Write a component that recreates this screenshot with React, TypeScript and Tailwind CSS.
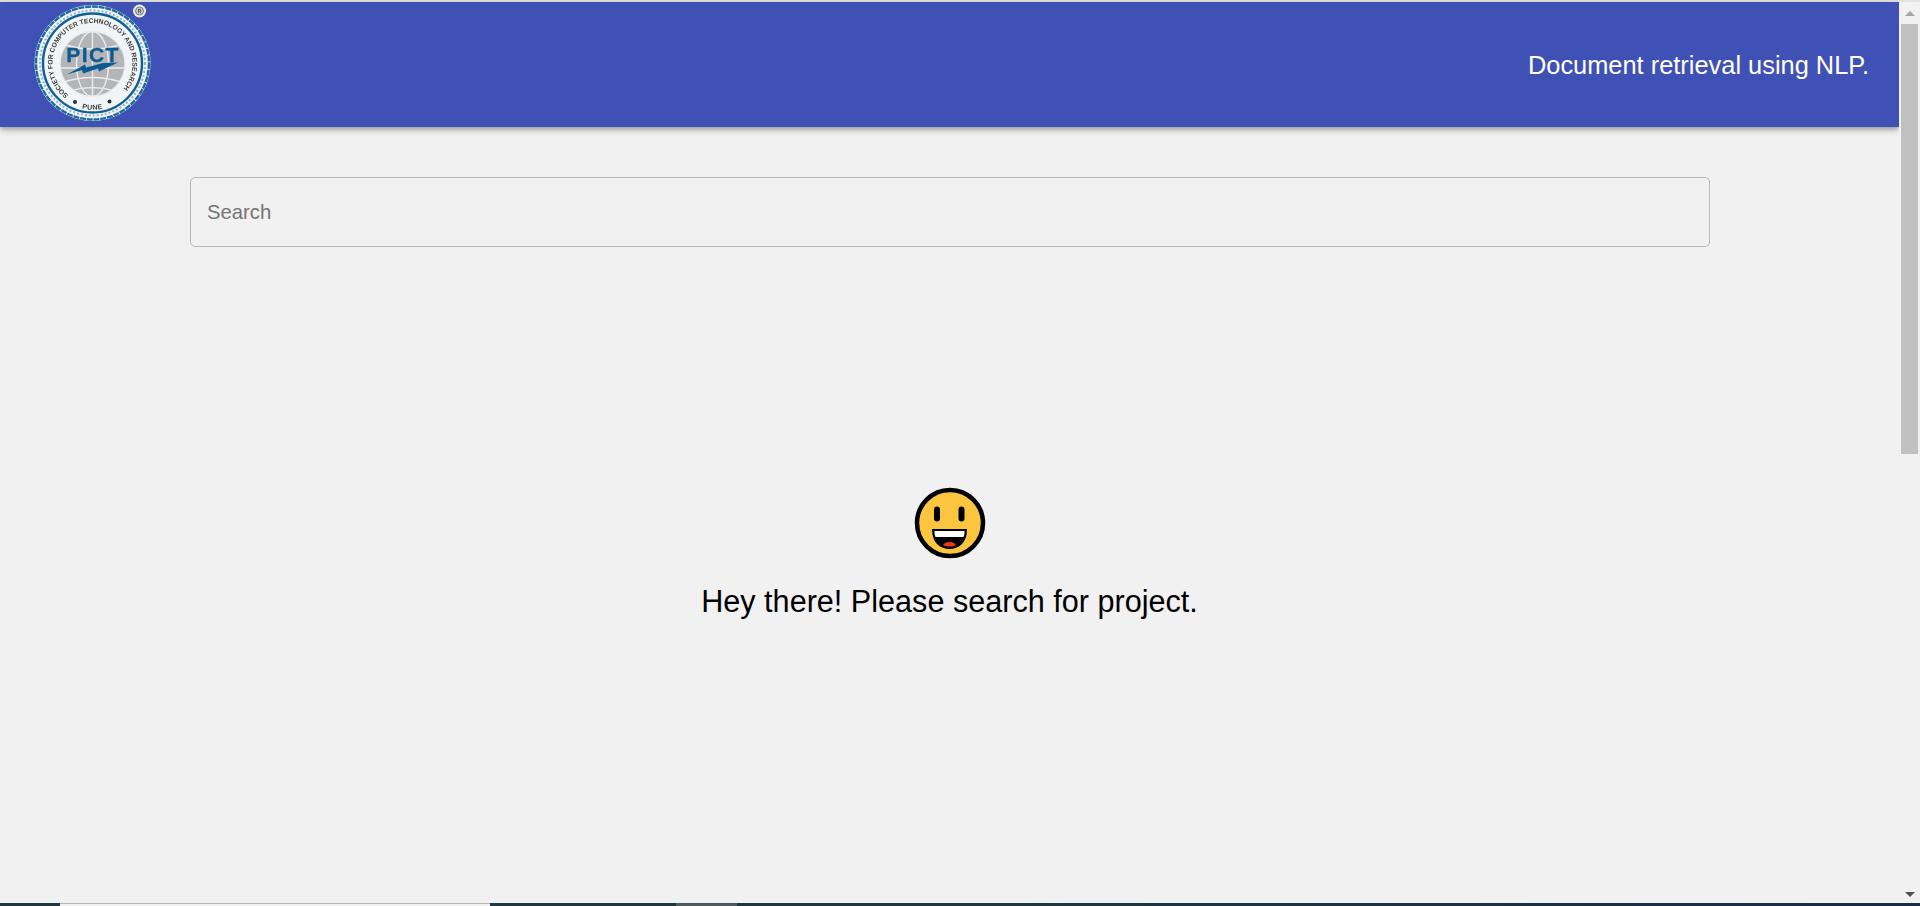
function Logo() {
  return (
    <svg width="120" height="120" viewBox="0 0 120 120" className="blur-[0.5px]">
      <defs>
        <path id="ring-top" d="M 36.5 93 A 40 40 0 1 1 84.5 93" fill="none" />
        <path id="ring-bottom" d="M 20.5 82 A 44 44 0 0 0 100.5 82" fill="none" />
        <clipPath id="globe-clip">
          <circle cx="60.5" cy="62" r="32.5" />
        </clipPath>
      </defs>
      <circle cx="60.5" cy="61" r="58" fill="#f2f5f7" />
      <circle cx="60.5" cy="61" r="56.5" fill="none" stroke="#1d6a9c" strokeWidth="2.4" strokeDasharray="6 0.8" />
      <circle cx="60.5" cy="61" r="52.5" fill="none" stroke="#8fb3ca" strokeWidth="2" strokeDasharray="2 2" />
      <circle cx="60.5" cy="61" r="49.5" fill="none" stroke="#0f5f94" strokeWidth="2.4" />
      <text fontFamily="Liberation Sans, sans-serif" fontSize="6.7" fontWeight="700" fill="#3a3a3a">
        <textPath href="#ring-top">SOCIETY FOR COMPUTER TECHNOLOGY AND RESEARCH</textPath>
      </text>
      <text fontFamily="Liberation Sans, sans-serif" fontSize="7" fontWeight="700" fill="#3a3a3a" textAnchor="middle" letterSpacing="0.5">
        <textPath href="#ring-bottom" startOffset="50%">PUNE</textPath>
      </text>
      <circle cx="43" cy="100" r="2" fill="#2e2e2e" />
      <circle cx="77.5" cy="99.5" r="2" fill="#2e2e2e" />
      <circle cx="60.5" cy="62" r="32.5" fill="#b4b5b8" />
      <g clipPath="url(#globe-clip)" fill="none" stroke="#ececec" strokeWidth="1.4">
        <ellipse cx="60.5" cy="62" rx="16" ry="32.5" />
        <line x1="60.5" y1="29" x2="60.5" y2="95" />
        <path d="M 30 42 Q 60 52 91 42" />
        <path d="M 28 66 L 93 66" />
        <path d="M 32 80 Q 60 71 89 80" />
        <path d="M 38 89 Q 60 82 83 89" />
      </g>
      <circle cx="60.5" cy="62" r="32.5" fill="none" stroke="#ececec" strokeWidth="1.4" />
      <text x="61" y="60" textAnchor="middle" fontFamily="Liberation Sans, sans-serif" fontSize="21" fontWeight="700" fill="#0b5a92" letterSpacing="1.4" stroke="#0b5a92" strokeWidth="0.3">
        PICT
      </text>
      <path d="M 35 72.5 L 53 62.5 L 54 65.5 L 71 61 L 86 60.5 L 67 69.5 L 66 66.5 L 51 71.5 L 50 68 Z" fill="#0b5a92" />
      <circle cx="107.5" cy="9" r="6.5" fill="#ececec" />
      <circle cx="107.5" cy="9" r="4" fill="#c9c9c9" stroke="#666" strokeWidth="0.8" />
      <text x="107.5" y="11" textAnchor="middle" fontFamily="Liberation Sans, sans-serif" fontSize="5" fontWeight="700" fill="#444">
        R
      </text>
    </svg>
  );
}

function Smiley() {
  return (
    <svg width="72" height="72" viewBox="0 0 72 72">
      <circle cx="36" cy="36" r="33" fill="#fcc53f" stroke="#000" strokeWidth="4.5" />
      <rect x="20" y="19.5" width="6" height="15" rx="3" fill="#000" />
      <rect x="44.5" y="19.5" width="6" height="15" rx="3" fill="#000" />
      <path d="M 18 42 L 53 42 C 53 56 45 62 35.5 62 C 26 62 18 56 18 42 Z" fill="#000" />
      <path d="M 20.5 44 L 50.5 44 C 50.5 46 50.5 48 49.5 50 L 21.5 50 C 20.5 48 20.5 46 20.5 44 Z" fill="#fff" />
      <path d="M 29 58 C 31 54 40 54 42 58 C 38 60 33 60 29 58 Z" fill="#ee3a1b" />
    </svg>
  );
}

function Scrollbar() {
  return (
    <div className="flex flex-col items-center w-[21px] bg-[#f1f1f1]">
      <div className="flex justify-center items-center h-[22px] w-full">
        <div className="w-0 h-0 border-l-[5px] border-r-[5px] border-b-[5px] border-l-transparent border-r-transparent border-b-[#a3a3a3]" />
      </div>
      <div className="w-[17px] h-[430px] bg-[#c1c1c1]" />
      <div className="flex-1" />
      <div className="flex justify-center items-center h-[17px] w-full">
        <div className="w-0 h-0 border-l-[5px] border-r-[5px] border-t-[5px] border-l-transparent border-r-transparent border-t-[#505050]" />
      </div>
    </div>
  );
}

export default function App() {
  return (
    <div className="flex flex-col h-[906px] overflow-hidden bg-[#f1f1f1] font-['Liberation_Sans',Arial,sans-serif]">
      <div className="h-[2px] bg-[#e4e4e4]" />
      <div className="flex flex-1 min-h-0">
        <div className="flex flex-col flex-1 min-w-0">
          <header className="flex justify-between items-center h-[125px] pl-[32px] pr-[30px] bg-[#3f51b5] shadow-[0_2px_4px_-1px_rgba(0,0,0,0.2),0_4px_5px_0_rgba(0,0,0,0.14),0_1px_10px_0_rgba(0,0,0,0.12)]">
            <div className="self-start">
              <Logo />
            </div>
            <span className="mt-[2px] text-[25.4px] text-white">Document retrieval using NLP.</span>
          </header>
          <div className="ml-[190px] mr-[189px] mt-[50px]">
            <input
              placeholder="Search"
              className="w-full h-[70px] px-[16px] text-[20.3px] bg-transparent border border-[#b8b8b8] rounded-[5px] outline-none placeholder:text-[#757575]"
            />
          </div>
          <div className="flex flex-col items-center mt-[240px]">
            <Smiley />
            <p className="mt-[24px] text-[30.6px] leading-[36px] text-black">Hey there! Please search for project.</p>
          </div>
        </div>
        <Scrollbar />
      </div>
      <div className="flex h-[3px] bg-[linear-gradient(90deg,#21373f_0%,#21373f_50%,#1b2a45_100%)]">
        <div className="w-[60px]" />
        <div className="w-[430px] bg-[#f1f1f1] border-t border-[#b4b4b4]" />
        <div className="w-[186px]" />
        <div className="w-[61px] bg-[#4d5c60]" />
      </div>
    </div>
  );
}
